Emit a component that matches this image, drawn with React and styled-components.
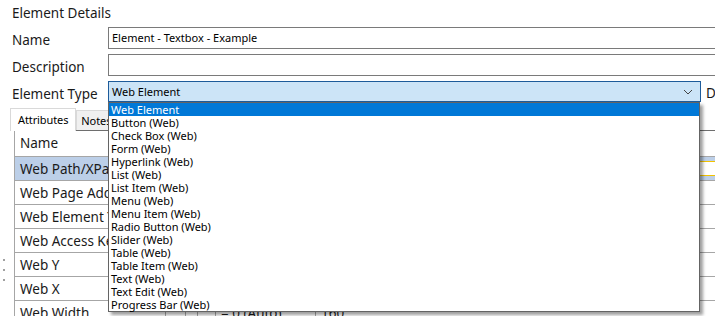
import React from 'react';
import styled, { createGlobalStyle } from 'styled-components';

const GlobalStyle = createGlobalStyle`
  html, body {
    margin: 0;
    padding: 0;
    overflow: hidden;
    background: #fff;
  }
  body {
    font-family: 'Noto Sans', 'Open Sans', sans-serif;
    color: #000;
  }
`;

const Page = styled.div`
  width: 780px;
  height: 316px;
  overflow: hidden;
`;

const Title = styled.div`
  padding: 3px 0 0 12px;
  height: 21px;
  line-height: 21px;
  font-size: 13.5px;
  color: #1a1a1a;
`;

const Form = styled.div`
  display: grid;
  grid-template-columns: 96px 660px;
  row-gap: 5px;
  padding-left: 12px;
  margin-top: 3px;
`;

const Label = styled.div`
  font-size: 13.5px;
  line-height: 22px;
  padding-top: 2px;
  height: 20px;
  color: #1a1a1a;
  white-space: nowrap;
`;

const TextBox = styled.div`
  box-sizing: border-box;
  height: 22px;
  border: 1px solid #7a7a7a;
  background: #fff;
  padding: 0 3px;
  font-size: 11px;
  line-height: 20px;
  color: #000;
`;

const SelectRow = styled.div`
  display: flex;
  align-items: flex-start;
  gap: 5px;
`;

const SelectWrap = styled.div`
  position: relative;
  width: 593px;
  flex: none;
`;

const SelectBox = styled.div`
  box-sizing: border-box;
  height: 21px;
  border: 1px solid #1d5b9a;
  background: #cce4f7;
  display: flex;
  align-items: center;
  justify-content: space-between;
  padding: 0 7px 0 3px;
  font-size: 11px;
  color: #000;
`;

const SideLabel = styled(Label)`
  padding-top: 1px;
`;

const List = styled.div`
  position: absolute;
  top: 100%;
  left: 0;
  right: 1px;
  z-index: 5;
  box-sizing: border-box;
  border: 1px solid #646464;
  background: #fff;
  box-shadow: 3px 3px 3px rgba(0, 0, 0, 0.38);
`;

const Item = styled.div`
  height: 13px;
  line-height: 13px;
  padding-left: 2px;
  font-size: 11px;
  white-space: nowrap;
  background: ${(p) => (p.$active ? '#0078d7' : '#fff')};
  color: ${(p) => (p.$active ? '#fff' : '#000')};
`;

const Lower = styled.div`
  display: flex;
  margin-top: 5px;
`;

const Grip = styled.div`
  width: 10px;
  flex: none;
  display: flex;
  flex-direction: column;
  gap: 8px;
  padding: 151px 0 0 3px;
  box-sizing: border-box;
`;

const Dot = styled.span`
  width: 2px;
  height: 2px;
  background: #a0a0a0;
`;

const TabArea = styled.div`
  flex: 1;
`;

const TabStrip = styled.div`
  display: flex;
  align-items: flex-end;
  height: 22px;
`;

const Tab = styled.div`
  box-sizing: border-box;
  height: ${(p) => (p.$active ? 23 : 20)}px;
  margin-bottom: ${(p) => (p.$active ? -1 : 0)}px;
  padding: 0 ${(p) => (p.$active ? 7 : 4)}px 0 ${(p) => (p.$active ? 7 : 4)}px;
  border: 1px solid #d9d9d9;
  border-bottom: none;
  background: ${(p) => (p.$active ? '#fff' : '#f0f0f0')};
  font-size: 11px;
  line-height: ${(p) => (p.$active ? 21 : 19)}px;
  position: relative;
  z-index: ${(p) => (p.$active ? 1 : 0)};
  white-space: nowrap;
  letter-spacing: -0.1px;
`;

const Grid = styled.div`
  margin-left: 4px;
  border-left: 1px solid #a6a6a6;
  border-top: 1px solid #6e6e6e;
`;

const GridRow = styled.div`
  display: grid;
  grid-template-columns: 150px 20px 12px 18px 100px 1fr;
  box-sizing: border-box;
  height: ${(p) => (p.$header ? 25 : 24)}px;
  border-top: ${(p) => (p.$header ? 'none' : '1px solid #a6a6a6')};
  background: ${(p) => (p.$selected ? '#bccfe8' : '#fff')};
`;

const Cell = styled.div`
  border-left: ${(p) => (p.$first ? 'none' : '1px solid #a6a6a6')};
  padding: 1px 5px 0;
  font-size: 13.5px;
  line-height: 22px;
  white-space: nowrap;
  overflow: hidden;
  color: #1a1a1a;
`;

const EditBox = styled.div`
  margin: 4px 0;
  height: 13px;
  border-top: 1px solid #f2c200;
  border-bottom: 1px solid #f2c200;
  background: #fff;
`;

const elementTypes = [
  'Web Element',
  'Button (Web)',
  'Check Box (Web)',
  'Form (Web)',
  'Hyperlink (Web)',
  'List (Web)',
  'List Item (Web)',
  'Menu (Web)',
  'Menu Item (Web)',
  'Radio Button (Web)',
  'Slider (Web)',
  'Table (Web)',
  'Table Item (Web)',
  'Text (Web)',
  'Text Edit (Web)',
  'Progress Bar (Web)',
];

const attributes = [
  'Web Path/XPath',
  'Web Page Address',
  'Web Element Type',
  'Web Access Key',
  'Web Y',
  'Web X',
];

const Chevron = () => (
  <svg width="10" height="6" viewBox="0 0 10 6">
    <polyline points="1,1 5,5 9,1" fill="none" stroke="#444" strokeWidth="1" />
  </svg>
);

const App = () => {
  return (
    <Page>
      <GlobalStyle />
      <Title>Element Details</Title>

      <Form>
        <Label>Name</Label>
        <TextBox>Element - Textbox - Example</TextBox>

        <Label>Description</Label>
        <TextBox />

        <Label>Element Type</Label>
        <SelectRow>
          <SelectWrap>
            <SelectBox>
              <span>Web Element</span>
              <Chevron />
            </SelectBox>
            <List>
              {elementTypes.map((t, i) => (
                <Item key={t} $active={i === 0}>{t}</Item>
              ))}
            </List>
          </SelectWrap>
          <SideLabel>Default</SideLabel>
        </SelectRow>
      </Form>

      <Lower>
        <Grip>
          <Dot />
          <Dot />
          <Dot />
        </Grip>
        <TabArea>
          <TabStrip>
            <Tab $active>Attributes</Tab>
            <Tab>Notes</Tab>
          </TabStrip>
          <Grid>
            <GridRow $header>
              <Cell $first>Name</Cell>
              <Cell />
              <Cell />
              <Cell />
              <Cell>Value</Cell>
              <Cell />
            </GridRow>
            {attributes.map((a, i) => (
              <GridRow key={a} $selected={i === 0}>
                <Cell $first>{a}</Cell>
                <Cell />
                <Cell />
                <Cell />
                <Cell />
                {i === 0 ? <EditBox /> : <Cell />}
              </GridRow>
            ))}
            <GridRow>
              <Cell $first>Web Width</Cell>
              <Cell />
              <Cell />
              <Cell />
              <Cell>= 0 (Auto)</Cell>
              <Cell>160</Cell>
            </GridRow>
          </Grid>
        </TabArea>
      </Lower>
    </Page>
  );
};

export default App;
